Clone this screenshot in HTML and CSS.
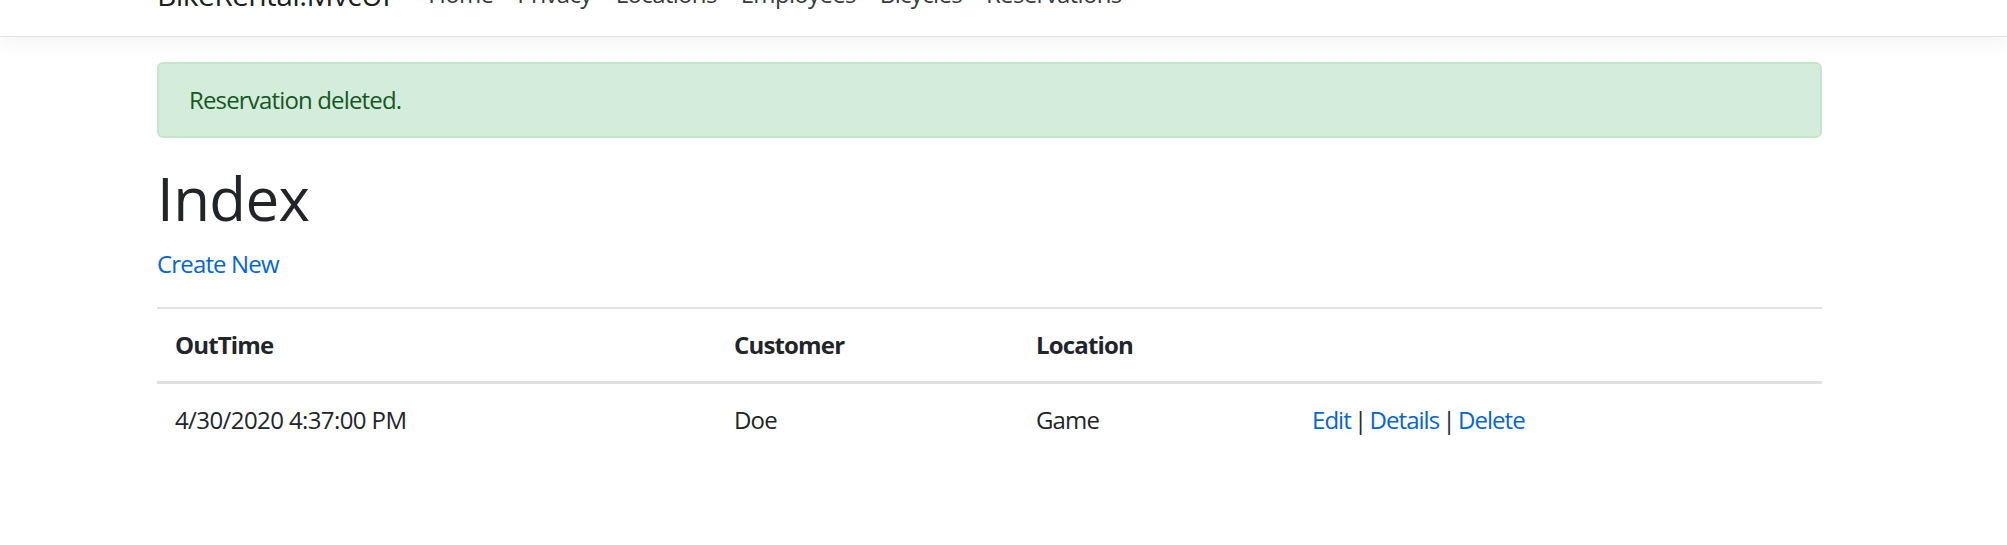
FILE: index.html
```html
<!DOCTYPE html>
<html lang="en">
<head>
<meta charset="utf-8">
<title>Index - BikeRental.MvcUI</title>
<link rel="stylesheet" href="styles.css">
</head>
<body>
<header class="site-header">
  <nav class="navbar">
    <div class="container nav-inner">
      <a class="brand" href="#">BikeRental.MvcUI</a>
      <ul class="nav-list">
        <li><a class="nav-link" href="#">Home</a></li>
        <li><a class="nav-link" href="#">Privacy</a></li>
        <li><a class="nav-link" href="#">Locations</a></li>
        <li><a class="nav-link" href="#">Employees</a></li>
        <li><a class="nav-link" href="#">Bicycles</a></li>
        <li><a class="nav-link" href="#">Reservations</a></li>
      </ul>
    </div>
  </nav>
</header>
<div class="container">
  <main class="main">
    <div class="alert">Reservation deleted.</div>
    <h1 class="title">Index</h1>
    <p class="lead-link"><a href="#">Create New</a></p>
    <table class="table">
      <colgroup>
        <col class="c1"><col class="c2"><col class="c3"><col class="c4">
      </colgroup>
      <thead>
        <tr>
          <th>OutTime</th>
          <th>Customer</th>
          <th>Location</th>
          <th></th>
        </tr>
      </thead>
      <tbody>
        <tr>
          <td class="date-cell">4/30/2020 4:37:00 PM</td>
          <td>Doe</td>
          <td>Game</td>
          <td class="actions"><a href="#">Edit</a> | <a href="#">Details</a> | <a href="#">Delete</a></td>
        </tr>
      </tbody>
    </table>
  </main>
</div>
</body>
</html>
```
FILE: styles.css
```css
html, body {
  margin: 0;
  padding: 0;
  background: #fff;
}
body {
  font-family: "Open Sans", "Noto Sans", "Liberation Sans", sans-serif;
  font-size: 24px;
  line-height: 1.5;
  color: #212529;
  letter-spacing: -0.035em;
}
a {
  color: #0366d6;
  text-decoration: none;
}
.container {
  width: 1665px;
  padding: 0 22.5px;
  margin-left: 134.5px;
}
.site-header {
  margin-top: -48px;
}
.navbar {
  padding: 12px 0;
  background: #fff;
  border-bottom: 1.5px solid #dee2e6;
  box-shadow: 0 6px 18px rgba(0, 0, 0, 0.05);
  margin-bottom: 24.5px;
}
.nav-inner {
  display: flex;
  align-items: center;
}
.brand {
  font-size: 30px;
  line-height: 45px;
  padding: 7.5px 0;
  margin-right: 26px;
  color: rgba(0, 0, 0, 0.9);
  letter-spacing: -0.02em;
}
.nav-list {
  display: flex;
  list-style: none;
  margin: 0;
  padding: 0;
}
.nav-link {
  display: block;
  padding: 12px 12px;
  line-height: 36px;
  color: #343a40;
  letter-spacing: -0.028em;
}
.main {
  padding-bottom: 24px;
}
.alert {
  padding: 18px 30px;
  border: 2px solid #c3e6cb;
  border-radius: 6px;
  background: #d4edda;
  color: #155724;
  margin-bottom: 24px;
}
.title {
  margin: 1px 0 12px;
  font-size: 60px;
  line-height: 72px;
  font-weight: 400;
  letter-spacing: -0.01em;
}
.lead-link {
  margin: 0 0 25.5px;
}
.table {
  width: 100%;
  border-collapse: collapse;
  margin-bottom: 24px;
}
.table .c1 { width: 559px; }
.table .c2 { width: 302px; }
.table .c3 { width: 276px; }
.table th,
.table td {
  padding: 18px;
  text-align: left;
  vertical-align: top;
  border-top: 2px solid #dee2e6;
}
.table thead th {
  border-bottom: 3px solid #dee2e6;
  font-weight: 700;
}
.table .date-cell {
  letter-spacing: -0.025em;
}
.table .actions {
  word-spacing: -2px;
  letter-spacing: -0.04em;
}
```
